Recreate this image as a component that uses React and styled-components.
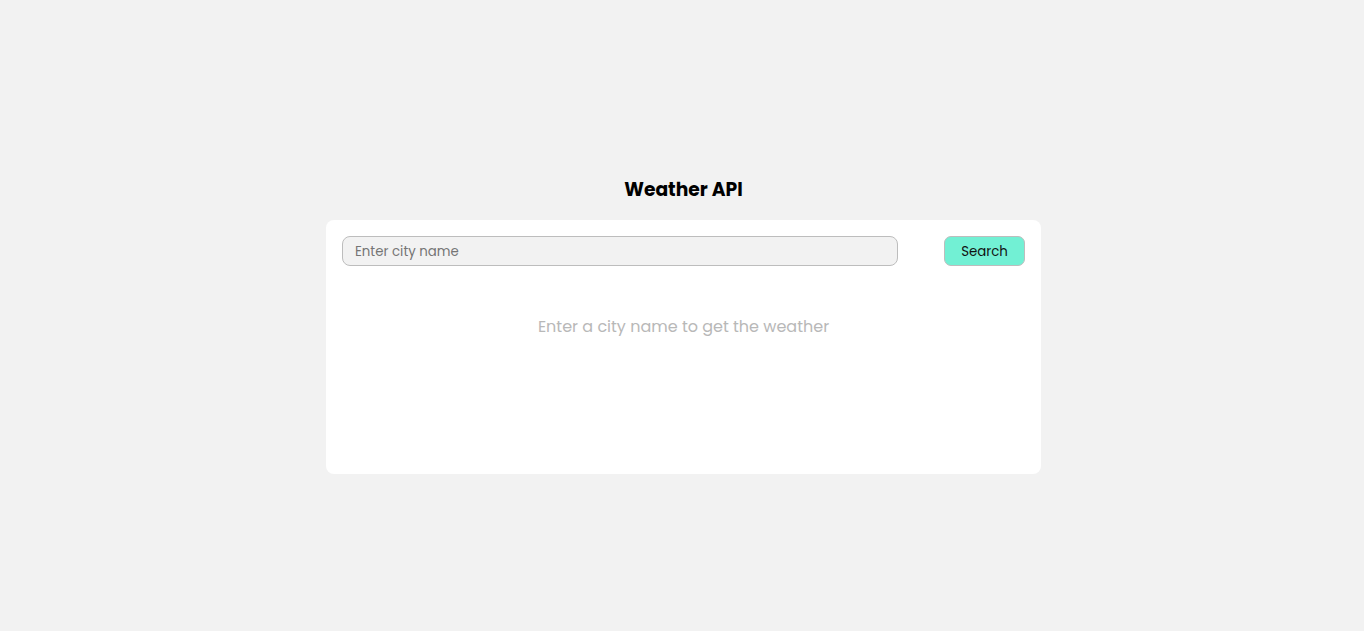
import React, { useState } from 'react'
import styled, { createGlobalStyle } from 'styled-components'

const GlobalStyle = createGlobalStyle`
  body {
    margin: 0;
    background: #f2f2f2;
    font-family: "Poppins", "Inter", "Noto Sans", sans-serif;
  }
`

export default () => {
  const [city, setCity] = useState('')
  return (
    <Page>
      <GlobalStyle />
      <Title>Weather API</Title>
      <Card>
        <SearchRow>
          <CityInput
            placeholder="Enter city name"
            value={city}
            onChange={e => setCity(e.target.value)}
          />
          <SearchButton>Search</SearchButton>
        </SearchRow>
        <Message>Enter a city name to get the weather</Message>
      </Card>
    </Page>
  )
}

const Page = styled.div`
  display: flex;
  flex-direction: column;
  align-items: center;
  padding: 178px 0 0 3px;
  min-height: 100vh;
  box-sizing: border-box;
`

const Title = styled.h1`
  margin: 0 0 18px;
  font-size: 18.72px;
  line-height: 24px;
  font-weight: 700;
  color: #000;
`

const Card = styled.div`
  width: 715px;
  height: 254px;
  box-sizing: border-box;
  padding: 16px;
  background: #fff;
  border-radius: 8px;
`

const SearchRow = styled.div`
  display: flex;
  align-items: center;
  gap: 46px;
`

const CityInput = styled.input`
  flex: 1;
  height: 30px;
  box-sizing: border-box;
  padding: 1px 12px 0;
  font-family: inherit;
  font-size: 13.333px;
  color: #333;
  background: #f2f2f2;
  border: 1px solid #bdbdbd;
  border-radius: 8px;
  outline: none;

  &::placeholder {
    color: #757575;
  }
`

const SearchButton = styled.button`
  width: 81px;
  height: 30px;
  padding: 1px 0 0;
  font-family: inherit;
  font-size: 13.333px;
  color: #111;
  background: #72f0d4;
  border: 1px solid #bdbdbd;
  border-radius: 7px;
  cursor: pointer;
`

const Message = styled.p`
  margin: 51px 0 0;
  text-align: center;
  font-size: 16px;
  line-height: 20px;
  color: #b8b8b8;
`
